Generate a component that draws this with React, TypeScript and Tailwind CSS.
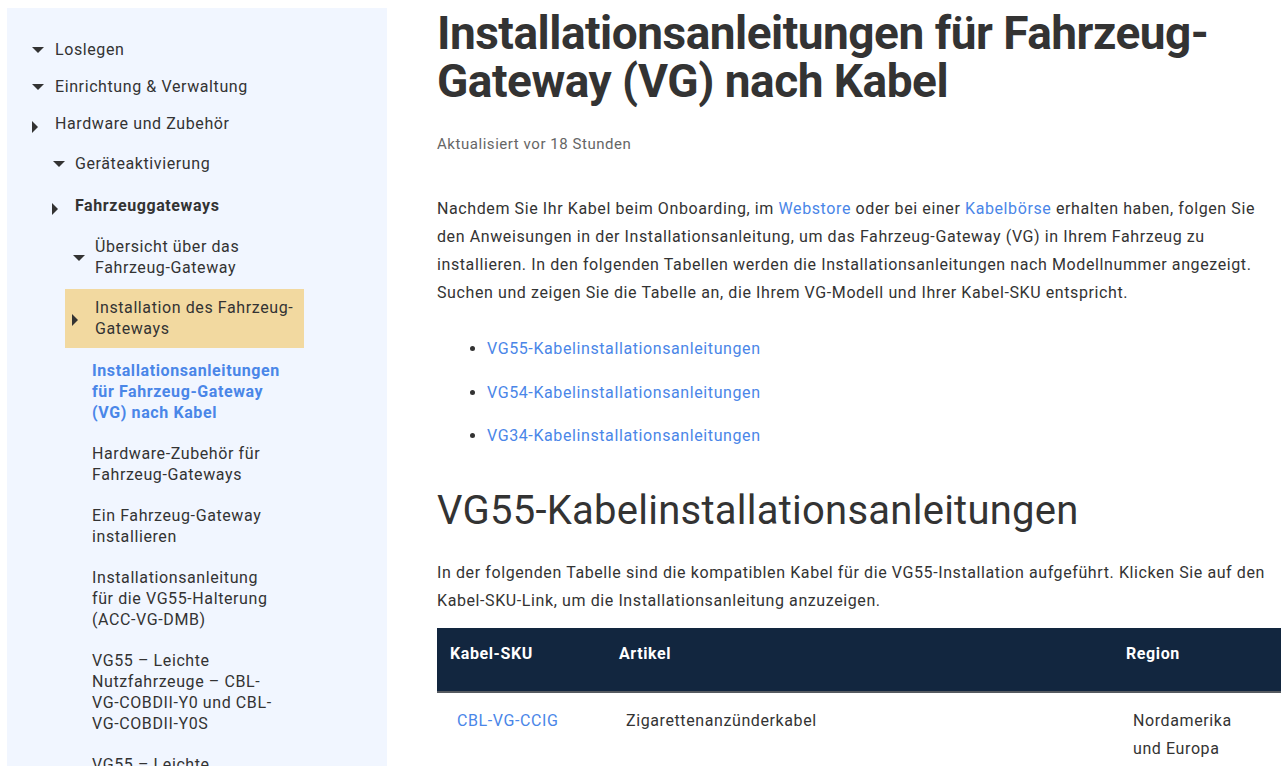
import React from "react";

const Down = () => (
  <svg width="12" height="6" viewBox="0 0 12 6" className="block">
    <path d="M0 0 L12 0 L6 6 Z" fill="#333333" />
  </svg>
);
const Right = () => (
  <svg width="6" height="12" viewBox="0 0 6 12" className="block">
    <path d="M0 0 L6 6 L0 12 Z" fill="#333333" />
  </svg>
);

export default function App() {
  return (
    <div
      className="flex min-h-[766px] bg-white text-[#333333] overflow-hidden tracking-[0.6px]"
      style={{ fontFamily: "Roboto, 'Noto Sans', sans-serif" }}
    >
      {/* Sidebar */}
      <aside className="ml-[7px] mt-[8px] w-[380px] shrink-0 bg-[#f1f6ff] pt-[31px] text-[16px] leading-[21px]">
        <div className="flex items-center pl-[25px]">
          <span className="w-[23px] flex"><Down /></span>
          <span>Loslegen</span>
        </div>
        <div className="flex items-center pl-[25px] mt-[16px]">
          <span className="w-[23px] flex"><Down /></span>
          <span>Einrichtung &amp; Verwaltung</span>
        </div>
        <div className="flex items-center pl-[25px] mt-[16px]">
          <span className="w-[23px] flex pt-[6px]"><Right /></span>
          <span>Hardware und Zubehör</span>
        </div>
        <div className="flex items-center pl-[45px] mt-[19px]">
          <span className="w-[23px] flex pl-[1px]"><Down /></span>
          <span>Geräteaktivierung</span>
        </div>
        <div className="flex items-center pl-[45px] mt-[21px]">
          <span className="w-[23px] flex pt-[7px]"><Right /></span>
          <span className="font-bold">Fahrzeuggateways</span>
        </div>
        <div className="flex items-center pl-[65px] mt-[20px]">
          <span className="w-[23px] flex pl-[1px] pt-[1px]"><Down /></span>
          <span>
            Übersicht über das
            <br />
            Fahrzeug-Gateway
          </span>
        </div>
        <div className="flex items-center ml-[58px] mt-[11px] w-[239px] h-[59px] bg-[#f2d9a0] pl-[7px] pb-[2px]">
          <span className="w-[23px] flex pt-[5px]"><Right /></span>
          <span>
            Installation des Fahrzeug-
            <br />
            Gateways
          </span>
        </div>
        <div className="ml-[85px] w-[189px]">
          <div className="mt-[12px] font-bold text-[#4a86e8]">
            Installationsanleitungen für Fahrzeug-Gateway (VG) nach Kabel
          </div>
          <div className="mt-[20px]">Hardware-Zubehör für Fahrzeug-Gateways</div>
          <div className="mt-[20px]">Ein Fahrzeug-Gateway installieren</div>
          <div className="mt-[20px]">
            Installationsanleitung für die VG55-Halterung (ACC-VG-DMB)
          </div>
          <div className="mt-[20px]">
            VG55 – Leichte Nutzfahrzeuge – CBL-VG-COBDII-Y0 und CBL-VG-COBDII-Y0S
          </div>
          <div className="mt-[20px]">VG55 – Leichte Nutzfahrzeuge</div>
        </div>
      </aside>

      {/* Main */}
      <main className="ml-[50px] w-[844px] shrink-0 pt-[9px]">
        <h1 className="text-[46px] leading-[48px] font-bold text-[#333333] tracking-[-0.5px]">
          Installationsanleitungen für Fahrzeug-Gateway (VG) nach Kabel
        </h1>
        <p className="mt-[29px] text-[15px] leading-[20px] text-[#666666] tracking-[0.55px]">
          Aktualisiert vor 18 Stunden
        </p>
        <p className="mt-[41px] text-[16px] leading-[28px]">
          Nachdem Sie Ihr Kabel beim Onboarding, im{" "}
          <a className="text-[#4a86e8]">Webstore</a> oder bei einer{" "}
          <a className="text-[#4a86e8]">Kabelbörse</a> erhalten haben, folgen Sie den
          Anweisungen in der Installationsanleitung, um das Fahrzeug-Gateway (VG) in
          Ihrem Fahrzeug zu installieren. In den folgenden Tabellen werden die
          Installationsanleitungen nach Modellnummer angezeigt. Suchen und zeigen Sie
          die Tabelle an, die Ihrem VG-Modell und Ihrer Kabel-SKU entspricht.
        </p>
        <ul className="mt-[28px] pl-[50px] text-[16px] leading-[28px] list-disc marker:text-[#333333]">
          <li className="text-[#4a86e8]">VG55-Kabelinstallationsanleitungen</li>
          <li className="mt-[15.5px] text-[#4a86e8]">VG54-Kabelinstallationsanleitungen</li>
          <li className="mt-[15.5px] text-[#4a86e8]">VG34-Kabelinstallationsanleitungen</li>
        </ul>
        <h2 className="mt-[39px] text-[40px] leading-[44px] font-normal text-[#333333] tracking-[0.25px]">
          VG55-Kabelinstallationsanleitungen
        </h2>
        <p className="mt-[26px] text-[16px] leading-[28px]">
          In der folgenden Tabelle sind die kompatiblen Kabel für die VG55-Installation
          aufgeführt. Klicken Sie auf den Kabel-SKU-Link, um die Installationsanleitung
          anzuzeigen.
        </p>
        <table className="mt-[13px] w-[844px] border-collapse text-[16px] leading-[28px]">
          <thead>
            <tr className="bg-[#12263f] text-white border-b-2 border-[#555a60]">
              <th className="w-[169px] text-left font-bold align-top pl-[13px] pt-[12px] pb-[23px]">
                Kabel-SKU
              </th>
              <th className="w-[507px] text-left font-bold align-top pl-[13px] pt-[12px] pb-[23px]">
                Artikel
              </th>
              <th className="text-left font-bold align-top pl-[13px] pt-[12px] pb-[23px]">
                Region
              </th>
            </tr>
          </thead>
          <tbody>
            <tr>
              <td className="align-top pl-[20px] pt-[14px]">
                <a className="text-[#4a86e8]">CBL-VG-CCIG</a>
              </td>
              <td className="align-top pl-[20px] pt-[14px]">Zigarettenanzünderkabel</td>
              <td className="align-top pl-[20px] pt-[14px]">
                Nordamerika
                <br />
                und Europa
              </td>
            </tr>
          </tbody>
        </table>
      </main>
    </div>
  );
}
